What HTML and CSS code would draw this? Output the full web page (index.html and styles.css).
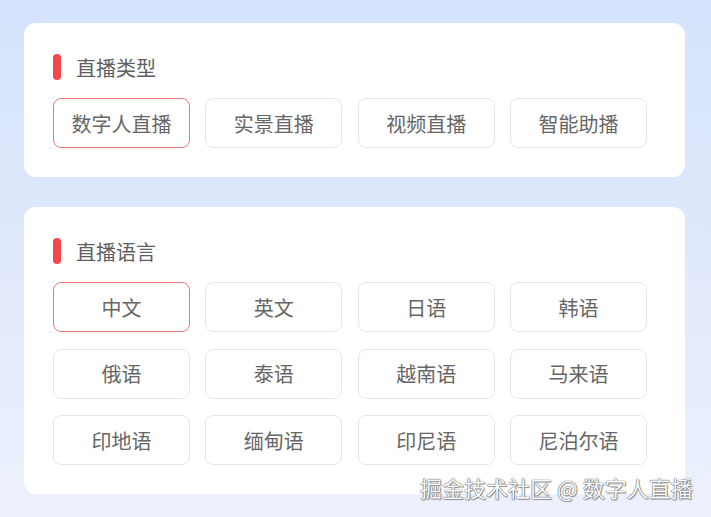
FILE: index.html
```html
<!DOCTYPE html>
<html lang="zh-CN">
<head>
<meta charset="utf-8">
<title>直播设置</title>
<link rel="stylesheet" href="styles.css">
</head>
<body>
<div class="page">
  <section class="card">
    <div class="card-head"><span class="bar"></span><span class="title">直播类型</span></div>
    <div class="options">
      <div class="opt active">数字人直播</div>
      <div class="opt">实景直播</div>
      <div class="opt">视频直播</div>
      <div class="opt">智能助播</div>
    </div>
  </section>
  <section class="card">
    <div class="card-head"><span class="bar"></span><span class="title">直播语言</span></div>
    <div class="options">
      <div class="opt active">中文</div>
      <div class="opt">英文</div>
      <div class="opt">日语</div>
      <div class="opt">韩语</div>
      <div class="opt">俄语</div>
      <div class="opt">泰语</div>
      <div class="opt">越南语</div>
      <div class="opt">马来语</div>
      <div class="opt">印地语</div>
      <div class="opt">缅甸语</div>
      <div class="opt">印尼语</div>
      <div class="opt">尼泊尔语</div>
    </div>
  </section>
  <div class="watermark">掘金技术社区 @ 数字人直播</div>
</div>
</body>
</html>
```
FILE: styles.css
```css
html, body {
  margin: 0;
  padding: 0;
}
body {
  width: 711px;
  height: 517px;
  overflow: hidden;
  background: linear-gradient(180deg, #d4e2fb 0%, #e3ebfc 60%, #edf1fd 100%);
  font-family: "Noto Sans CJK SC", "Noto Sans", sans-serif;
}
.page {
  position: relative;
  height: 517px;
  box-sizing: border-box;
  padding: 23px 26px 0 24px;
  display: flex;
  flex-direction: column;
  gap: 30px;
}
.card {
  background: #ffffff;
  border-radius: 12px;
  padding: 31px 38px 29px 29px;
}
.card-head {
  display: flex;
  align-items: center;
  gap: 15px;
  height: 26px;
  margin-bottom: 18px;
}
.bar {
  width: 8px;
  height: 26px;
  border-radius: 4px;
  background: #f5474b;
}
.title {
  font-size: 20px;
  line-height: 26px;
  color: #5e5e5e;
  position: relative;
  top: 1px;
}
.options {
  display: grid;
  grid-template-columns: repeat(4, 137px);
  column-gap: 15.33px;
  row-gap: 16.5px;
}
.opt {
  height: 50px;
  box-sizing: border-box;
  border: 1px solid #e6e6e9;
  border-radius: 8px;
  display: flex;
  align-items: center;
  justify-content: center;
  font-size: 20px;
  color: #666666;
}
.opt.active {
  border-color: #ef7878;
}
.watermark {
  position: absolute;
  left: 420px;
  top: 473px;
  font-size: 22px;
  line-height: 28px;
  color: #ffffff;
  white-space: nowrap;
  text-shadow: 0 0 1px #4a4a4a, 0 0 1px #4a4a4a, 1px 1px 1px rgba(0,0,0,0.35);
}
```
